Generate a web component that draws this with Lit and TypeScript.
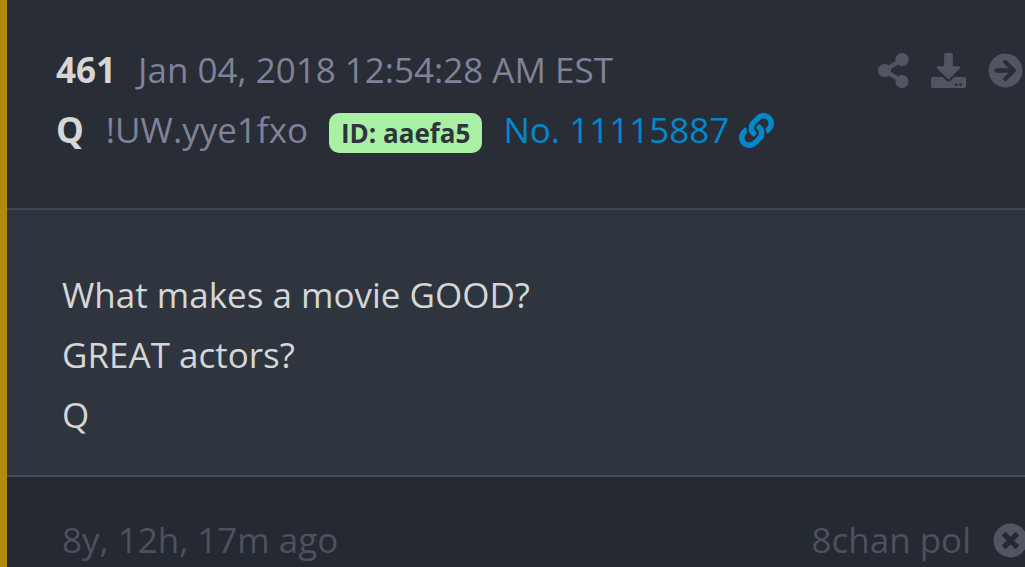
import { LitElement, html, css, svg } from "lit";
import { customElement, property } from "lit/decorators.js";

const ICONS: Record<string, { width: number; path: string }> = {
  share: {
    width: 448,
    path: "M352 320c-22.608 0-43.387 7.819-59.79 20.895l-102.486-64.054a96.551 96.551 0 0 0 0-41.683l102.486-64.054C308.613 184.181 329.392 192 352 192c53.019 0 96-42.981 96-96S405.019 0 352 0s-96 42.981-96 96c0 7.158.79 14.13 2.276 20.841L155.79 180.895C139.387 167.819 118.608 160 96 160c-53.019 0-96 42.981-96 96s42.981 96 96 96c22.608 0 43.387-7.819 59.79-20.895l102.486 64.054A96.301 96.301 0 0 0 256 416c0 53.019 42.981 96 96 96s96-42.981 96-96-42.981-96-96-96z",
  },
  download: {
    width: 512,
    path: "M216 0h80c13.3 0 24 10.7 24 24v168h87.7c17.8 0 26.7 21.5 14.1 34.1L269.7 378.3c-7.5 7.5-19.8 7.5-27.3 0L90.1 226.1c-12.6-12.6-3.7-34.1 14.1-34.1H192V24c0-13.3 10.7-24 24-24zm296 376v112c0 13.3-10.7 24-24 24H24c-13.3 0-24-10.7-24-24V376c0-13.3 10.7-24 24-24h146.7l49 49c20.1 20.1 52.5 20.1 72.6 0l49-49H488c13.3 0 24 10.7 24 24zm-124 88c0-11-9-20-20-20s-20 9-20 20 9 20 20 20 20-9 20-20zm64 0c0-11-9-20-20-20s-20 9-20 20 9 20 20 20 20-9 20-20z",
  },
  next: {
    width: 512,
    path: "M256 8c137 0 248 111 248 248S393 504 256 504 8 393 8 256 119 8 256 8zm-28.9 143.6l75.5 72.4H120c-13.3 0-24 10.7-24 24v16c0 13.3 10.7 24 24 24h182.6l-75.5 72.4c-9.7 9.3-9.9 24.8-.4 34.3l11 10.9c9.4 9.4 24.6 9.4 33.9 0L404.3 273c9.4-9.4 9.4-24.6 0-33.9L271.6 106.3c-9.4-9.4-24.6-9.4-33.9 0l-11 10.9c-9.5 9.6-9.3 25.1.4 34.4z",
  },
  link: {
    width: 512,
    path: "M326.612 185.391c59.747 59.809 58.927 155.698.36 214.59-.11.12-.24.25-.36.37l-67.2 67.2c-59.27 59.27-155.699 59.262-214.96 0-59.27-59.26-59.27-155.7 0-214.96l37.106-37.106c9.84-9.84 26.786-3.3 27.294 10.606.648 17.722 3.826 35.527 9.69 52.721 1.986 5.822.567 12.262-3.783 16.612l-13.087 13.087c-28.026 28.026-28.905 73.66-1.155 101.96 28.024 28.579 74.086 28.749 102.325.51l67.2-67.19c28.191-28.191 28.073-73.757 0-101.83-3.701-3.694-7.429-6.564-10.341-8.569a16.037 16.037 0 0 1-6.947-12.606c-.396-10.567 3.348-21.456 11.698-29.806l21.054-21.055c5.521-5.521 14.182-6.199 20.584-1.731a152.482 152.482 0 0 1 20.522 17.197zM467.547 44.449c-59.261-59.262-155.69-59.27-214.96 0l-67.2 67.2c-.12.12-.25.25-.36.37-58.566 58.892-59.387 154.781.36 214.59a152.454 152.454 0 0 0 20.521 17.196c6.402 4.468 15.064 3.789 20.584-1.731l21.054-21.055c8.35-8.35 12.094-19.239 11.698-29.806a16.037 16.037 0 0 0-6.947-12.606c-2.912-2.005-6.64-4.875-10.341-8.569-28.073-28.073-28.191-73.639 0-101.83l67.2-67.19c28.239-28.239 74.3-28.069 102.325.51 27.75 28.3 26.872 73.934-1.155 101.96l-13.087 13.087c-4.35 4.35-5.769 10.79-3.783 16.612 5.864 17.194 9.042 34.999 9.69 52.721.509 13.906 17.454 20.446 27.294 10.606l37.106-37.106c59.271-59.259 59.271-155.699.001-214.959z",
  },
  close: {
    width: 512,
    path: "M256 8C119 8 8 119 8 256s111 248 248 248 248-111 248-248S393 8 256 8zm121.6 313.1c4.7 4.7 4.7 12.3 0 17L338 377.6c-4.7 4.7-12.3 4.7-17 0L256 312l-65.1 65.6c-4.7 4.7-12.3 4.7-17 0L134.4 338c-4.7-4.7-4.7-12.3 0-17l65.6-65-65.6-65.1c-4.7-4.7-4.7-12.3 0-17l39.6-39.6c4.7-4.7 12.3-4.7 17 0l65 65.7 65.1-65.6c4.7-4.7 12.3-4.7 17 0l39.6 39.6c4.7 4.7 4.7 12.3 0 17L312 256l65.6 65.1z",
  },
};

@customElement("post-icon")
class PostIcon extends LitElement {
  @property() name = "share";

  static styles = css`
    :host {
      display: block;
      flex: none;
    }
    .glyph {
      display: block;
      height: 35px;
      fill: currentColor;
    }
  `;

  render() {
    const icon = ICONS[this.name];
    return html`<svg class="glyph" viewBox="0 0 ${icon.width} 512" aria-hidden="true">
      ${svg`<path d=${icon.path}></path>`}
    </svg>`;
  }
}

@customElement("app-root")
class AppRoot extends LitElement {
  static styles = css`
    :host {
      display: block;
      overflow: hidden;
      font-family: "Open Sans", "Noto Sans", sans-serif;
      font-size: 35px;
      line-height: 60px;
      color: #d6d6d6;
      background: #252931;
    }
    .post {
      box-sizing: border-box;
      min-height: 100vh;
      border-left: 7px solid #b08912;
    }
    .head {
      display: flex;
      justify-content: space-between;
      padding: 40px 2px 48px 49px;
      background: #292d36;
      border-bottom: 2px solid #434852;
    }
    .line {
      display: flex;
      align-items: center;
      white-space: nowrap;
      color: #7f8299;
    }
    .strong {
      font-weight: 700;
      color: #d6d6d6;
    }
    .date,
    .trip {
      margin-left: 22px;
    }
    .badge {
      margin: 6px 21px 0;
      padding: 0 12px;
      border-radius: 10px;
      font-size: 26px;
      line-height: 40px;
      font-weight: 700;
      color: #2f353f;
      background: #aaf0a4;
    }
    .number {
      display: flex;
      align-items: center;
      gap: 10px;
      color: #0088cc;
      text-decoration: none;
    }
    .actions {
      display: flex;
      align-items: center;
      gap: 22px;
      height: 60px;
    }
    .action {
      padding: 0;
      border: 0;
      background: none;
      color: #515563;
      cursor: pointer;
    }
    .body {
      padding: 55px 55px 30px;
      background: #2f353f;
      border-bottom: 2px solid #434852;
    }
    .text {
      margin: 0;
    }
    .foot {
      display: flex;
      justify-content: space-between;
      padding: 33px 0 0 55px;
      color: #4d515f;
    }
    .source {
      display: flex;
      align-items: center;
      gap: 22px;
      margin-right: -3px;
    }
  `;

  render() {
    return html`
      <article class="post">
        <header class="head">
          <div>
            <div class="line">
              <span class="strong">461</span>
              <time class="date">Jan 04, 2018 12:54:28 AM EST</time>
            </div>
            <div class="line">
              <span class="strong">Q</span>
              <span class="trip">!UW.yye1fxo</span>
              <span class="badge">ID: aaefa5</span>
              <a class="number" href="#11115887">No. 11115887<post-icon name="link"></post-icon></a>
            </div>
          </div>
          <div class="actions">
            <button class="action" aria-label="Share"><post-icon name="share"></post-icon></button>
            <button class="action" aria-label="Download"><post-icon name="download"></post-icon></button>
            <button class="action" aria-label="Next post"><post-icon name="next"></post-icon></button>
          </div>
        </header>
        <div class="body">
          <p class="text">What makes a movie GOOD?</p>
          <p class="text">GREAT actors?</p>
          <p class="text">Q</p>
        </div>
        <footer class="foot">
          <span>8y, 12h, 17m ago</span>
          <div class="source">
            <span>8chan pol</span>
            <button class="action" aria-label="Close"><post-icon name="close"></post-icon></button>
          </div>
        </footer>
      </article>
    `;
  }
}
